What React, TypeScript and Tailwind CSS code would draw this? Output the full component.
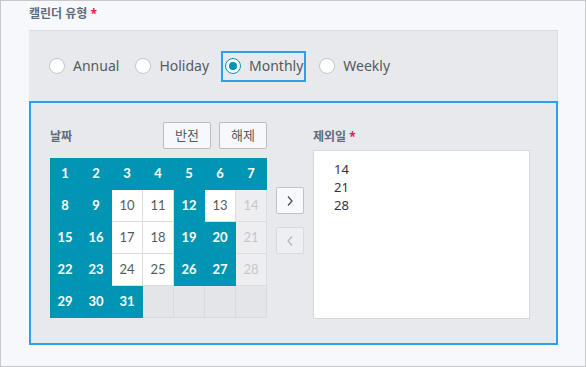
import React from "react";

const selected = new Set([1, 2, 3, 4, 5, 6, 7, 8, 9, 12, 15, 16, 19, 20, 22, 23, 26, 27, 29, 30, 31]);
const disabled = new Set([14, 21, 28]);

function Radio({ label, checked }: { label: string; checked?: boolean }) {
  return (
    <div
      className={
        "flex items-center h-[31px] pl-[2px] pr-[1px] border-2 " +
        (checked ? "border-[#2ca0ea]" : "border-transparent")
      }
    >
      <span
        className={
          "w-[16px] h-[16px] rounded-full bg-white border flex items-center justify-center " +
          (checked ? "border-[#0094b3]" : "border-[#c3c5cc]")
        }
      >
        {checked && <span className="w-[8px] h-[8px] rounded-full bg-[#0094b3]" />}
      </span>
      <span className="ml-[8px] text-[14px] leading-[20px] text-[#555a60]">{label}</span>
    </div>
  );
}

function Chevron({ dir, color }: { dir: "left" | "right"; color: string }) {
  return (
    <svg width="8" height="12" viewBox="0 0 8 12" fill="none">
      {dir === "right" ? (
        <polyline points="2,1.5 6,6 2,10.5" stroke={color} strokeWidth="1.3" />
      ) : (
        <polyline points="6,1.5 2,6 6,10.5" stroke={color} strokeWidth="1.3" />
      )}
    </svg>
  );
}

export default function App() {
  const cells: (number | null)[] = [];
  for (let i = 1; i <= 35; i++) cells.push(i <= 31 ? i : null);

  return (
    <div
      className="w-[586px] h-[367px] bg-[#f7f8fc] border border-[#c8c8c8] pl-[28px]"
      style={{ fontFamily: '"Noto Sans", "Noto Sans CJK KR", sans-serif' }}
    >
      <div className="h-[29px] pt-[5px] leading-[16px] text-[12px] font-bold text-[#5f6b7b]">
        캘린더 유형 <span className="text-[#e8194d]">*</span>
      </div>
      <div className="w-[529px] bg-[#e8e9ed] border-t border-r border-[#dcdde2]">
        <div className="h-[70px] flex items-center pl-[16px] gap-[9px]">
          <Radio label="Annual" />
          <Radio label="Holiday" />
          <Radio label="Monthly" checked />
          <Radio label="Weekly" />
        </div>
        <div className="w-[529px] h-[244px] border-2 border-[#2ca0ea] pl-[19px] pt-[19px] flex">
          <div className="w-[217px] flex flex-col">
            <div className="h-[27px] flex items-center">
              <span className="text-[12px] font-bold text-[#5f6b7b] flex-1 pt-[3px]">날짜</span>
              <div className="flex gap-[8px]">
                <button className="w-[48px] h-[27px] bg-[#f7f8fb] border border-[#b9bdc5] rounded-[2px] text-[13px] text-[#555a60]">
                  반전
                </button>
                <button className="w-[48px] h-[27px] bg-[#f7f8fb] border border-[#b9bdc5] rounded-[2px] text-[13px] text-[#555a60]">
                  해제
                </button>
              </div>
            </div>
            <div
              className="mt-[9px] grid grid-cols-[repeat(7,31px)] grid-rows-[repeat(5,32px)]"
              style={{ fontFamily: 'Lato, "Noto Sans", sans-serif' }}
            >
              {cells.map((d, i) => {
                let cls = "";
                if (d === null) cls = "bg-[#e4e5e9] border-[#d9dae0]";
                else if (selected.has(d)) cls = "bg-[#0095b3] border-[#0095b3] text-white font-bold";
                else if (disabled.has(d)) cls = "bg-[#eeeef1] border-[#dcdde2] text-[#c6c7cc]";
                else cls = "bg-white border-[#dcdde2] text-[#555a60]";
                return (
                  <div
                    key={i}
                    className={"border-r border-b flex items-center justify-center text-[13px] " + cls}
                  >
                    {d}
                  </div>
                );
              })}
            </div>
          </div>
          <div className="ml-[9px] mt-[65px] flex flex-col gap-[13px]">
            <button className="w-[28px] h-[27px] bg-[#f8f9fc] border border-[#bfc3cb] rounded-[2px] flex items-center justify-center">
              <Chevron dir="right" color="#4a4f57" />
            </button>
            <button className="w-[28px] h-[27px] bg-[#eeeff2] border border-[#d9dadf] rounded-[2px] flex items-center justify-center">
              <Chevron dir="left" color="#b5b8be" />
            </button>
          </div>
          <div className="ml-[9px] w-[217px] flex flex-col">
            <div className="h-[27px] flex items-center">
              <span className="text-[12px] font-bold text-[#5f6b7b] pt-[3px]">
                제외일 <span className="text-[#e8194d]">*</span>
              </span>
            </div>
            <div className="mt-[1px] h-[169px] bg-white border border-[#d6d8dd] pl-[20px] pt-[9px] text-[13px] leading-[18px] text-[#333]">
              <div>14</div>
              <div>21</div>
              <div>28</div>
            </div>
          </div>
        </div>
      </div>
    </div>
  );
}
